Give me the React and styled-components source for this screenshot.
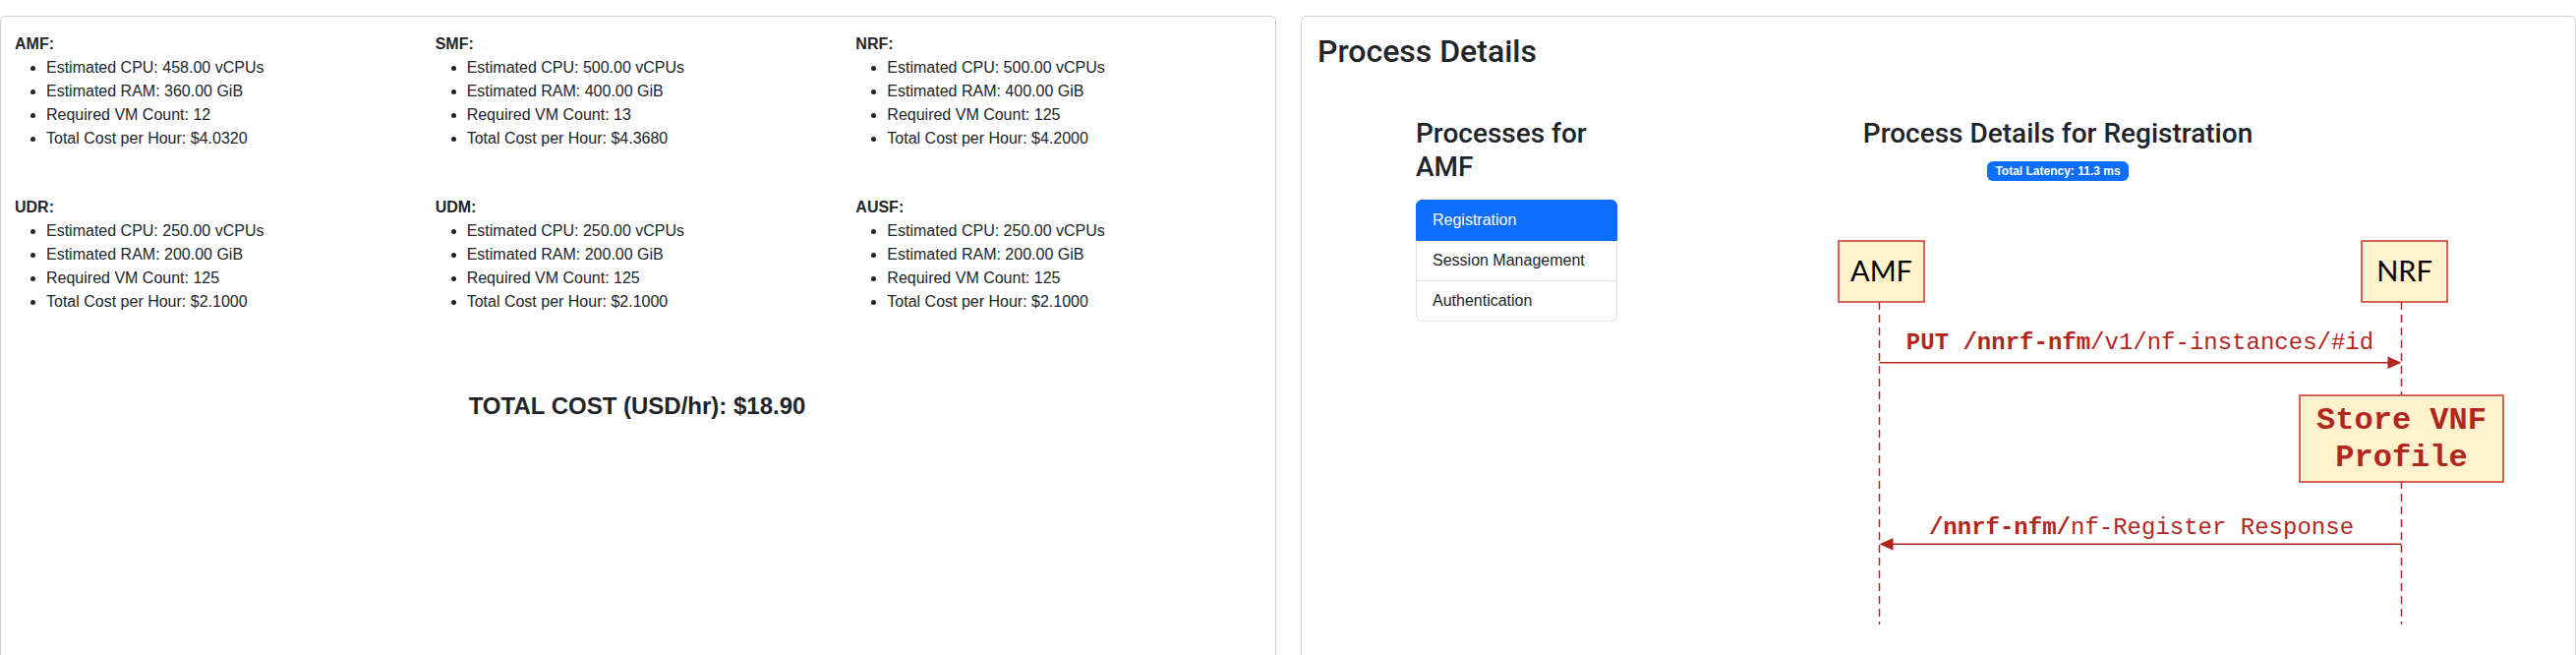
import React from "react";
import styled, { createGlobalStyle } from "styled-components";

const GlobalStyle = createGlobalStyle`
  html, body { margin: 0; padding: 0; background: #fff; }
  body {
    font-family: "Liberation Sans", Arial, sans-serif;
    font-size: 16px;
    line-height: 24px;
    color: #212529;
    overflow: hidden;
  }
  * { box-sizing: border-box; }
`;

const HEADING_FONT = 'Roboto, "Liberation Sans", Arial, sans-serif';

const Page = styled.div`
  display: grid;
  grid-template-columns: 1298px 1297px;
  column-gap: 25px;
  padding-top: 16px;
`;

const Card = styled.section`
  border: 1px solid rgba(0, 0, 0, 0.175);
  border-radius: 6px;
  background: #fff;
  min-height: 700px;
  padding: ${(p) => (p.$tight ? "16px 16px 16px 14px" : "16px")};
`;

const CostGrid = styled.div`
  display: grid;
  grid-template-columns: repeat(3, 1fr);
  column-gap: 17px;
  row-gap: 46px;
`;

const NfBlock = styled.div`
  display: flex;
  flex-direction: column;
`;

const NfName = styled.strong`
  display: block;
  font-weight: 700;
  line-height: 24px;
`;

const SpecList = styled.ul`
  margin: 0;
  padding-left: 32px;
  list-style: disc;
`;

const SpecItem = styled.li`
  line-height: 24px;
`;

const TotalCost = styled.h4`
  margin: 80px 0 0;
  font-size: 24px;
  font-weight: 700;
  line-height: 1.2;
  text-align: center;
`;

const CardTitle = styled.h2`
  margin: 0;
  font-family: ${HEADING_FONT};
  font-size: 32px;
  font-weight: 500;
  line-height: 1.2;
`;

const ProcessRow = styled.div`
  display: grid;
  grid-template-columns: 205px 848px;
  column-gap: 24px;
  padding-left: 100px;
  margin-top: 48px;
  align-items: start;
`;

const SubTitle = styled.h3`
  margin: 0 0 ${(p) => (p.$gap ? p.$gap : "0")};
  font-family: ${HEADING_FONT};
  font-size: 28px;
  font-weight: 500;
  line-height: 1.2;
  text-align: ${(p) => (p.$center ? "center" : "left")};
`;

const ListGroup = styled.div`
  display: flex;
  flex-direction: column;
`;

const ListItem = styled.div`
  padding: 8px 16px;
  line-height: 24px;
  border: 1px solid ${(p) => (p.$active ? "#0d6efd" : "#dee2e6")};
  background: ${(p) => (p.$active ? "#0d6efd" : "#fff")};
  color: ${(p) => (p.$active ? "#fff" : "#212529")};
  & + & {
    border-top-width: 0;
  }
  &:first-child {
    border-radius: 6px 6px 0 0;
  }
  &:last-child {
    border-radius: 0 0 6px 6px;
  }
`;

const DiagramCol = styled.div`
  display: flex;
  flex-direction: column;
`;

const BadgeRow = styled.div`
  display: flex;
  justify-content: center;
  margin-top: 11px;
`;

const Badge = styled.span`
  display: inline-block;
  padding: 4px 8px;
  font-size: 12px;
  font-weight: 700;
  line-height: 12px;
  color: #fff;
  background: #0d6efd;
  border-radius: 6px;
`;

const Diagram = styled.svg`
  display: block;
  margin-top: 45px;
  overflow: visible;
`;

const nfs = [
  { name: "AMF", cpu: "458.00", ram: "360.00", vms: "12", cost: "$4.0320" },
  { name: "SMF", cpu: "500.00", ram: "400.00", vms: "13", cost: "$4.3680" },
  { name: "NRF", cpu: "500.00", ram: "400.00", vms: "125", cost: "$4.2000" },
  { name: "UDR", cpu: "250.00", ram: "200.00", vms: "125", cost: "$2.1000" },
  { name: "UDM", cpu: "250.00", ram: "200.00", vms: "125", cost: "$2.1000" },
  { name: "AUSF", cpu: "250.00", ram: "200.00", vms: "125", cost: "$2.1000" },
];

const RED = "#b3261e";
const BOX_STROKE = "#c5362c";
const BOX_FILL = "#fff2cc";

function SequenceDiagram() {
  const amfX = 242.5;
  const nrfX = 773.5;
  const mono = '"Liberation Mono", "Courier New", monospace';
  return (
    <Diagram width="900" height="420" viewBox="0 0 900 420">
      <line x1={amfX} y1="78" x2={amfX} y2="406" stroke={RED} strokeWidth="1.5" strokeDasharray="8 5" />
      <line x1={nrfX} y1="78" x2={nrfX} y2="406" stroke={RED} strokeWidth="1.5" strokeDasharray="8 5" />

      <rect x="201" y="16" width="87" height="62" fill={BOX_FILL} stroke={BOX_STROKE} strokeWidth="1.5" />
      <text x="244.5" y="57" textAnchor="middle" fontFamily='Lato, "Open Sans", sans-serif' fontSize="29" fill="#000">AMF</text>
      <rect x="733" y="16" width="87" height="62" fill={BOX_FILL} stroke={BOX_STROKE} strokeWidth="1.5" />
      <text x="776.5" y="57" textAnchor="middle" fontFamily='Lato, "Open Sans", sans-serif' fontSize="29" fill="#000">NRF</text>

      <text x="507.5" y="126" textAnchor="middle" fontFamily={mono} fontSize="24" fill={RED}>
        <tspan fontWeight="700">PUT /nnrf-nfm</tspan>/v1/nf-instances/#id
      </text>
      <line x1={amfX} y1="139.7" x2={nrfX - 12} y2="139.7" stroke={RED} strokeWidth="1.5" />
      <polygon points={`${nrfX},139.7 ${nrfX - 14},133.5 ${nrfX - 14},146`} fill={RED} />

      <rect x="670" y="173" width="207" height="88" fill={BOX_FILL} stroke={BOX_STROKE} strokeWidth="1.5" />
      <text x="773.5" y="207" textAnchor="middle" fontFamily={mono} fontSize="32" fontWeight="700" fill={RED}>Store VNF</text>
      <text x="773.5" y="245" textAnchor="middle" fontFamily={mono} fontSize="32" fontWeight="700" fill={RED}>Profile</text>

      <text x="509" y="314" textAnchor="middle" fontFamily={mono} fontSize="24" fill={RED}>
        <tspan fontWeight="700">/nnrf-nfm/</tspan>nf-Register Response
      </text>
      <line x1={amfX + 12} y1="324.3" x2={nrfX} y2="324.3" stroke={RED} strokeWidth="1.5" />
      <polygon points={`${amfX},324.3 ${amfX + 14},318 ${amfX + 14},330.5`} fill={RED} />
    </Diagram>
  );
}

export default function App() {
  return (
    <>
      <GlobalStyle />
      <Page>
        <Card $tight>
          <CostGrid>
            {nfs.map((nf) => (
              <NfBlock key={nf.name}>
                <NfName>{nf.name}:</NfName>
                <SpecList>
                  <SpecItem>Estimated CPU: {nf.cpu} vCPUs</SpecItem>
                  <SpecItem>Estimated RAM: {nf.ram} GiB</SpecItem>
                  <SpecItem>Required VM Count: {nf.vms}</SpecItem>
                  <SpecItem>Total Cost per Hour: {nf.cost}</SpecItem>
                </SpecList>
              </NfBlock>
            ))}
          </CostGrid>
          <TotalCost>TOTAL COST (USD/hr): $18.90</TotalCost>
        </Card>
        <Card>
          <CardTitle>Process Details</CardTitle>
          <ProcessRow>
            <div>
              <SubTitle $gap="16px">Processes for AMF</SubTitle>
              <ListGroup>
                <ListItem $active>Registration</ListItem>
                <ListItem>Session Management</ListItem>
                <ListItem>Authentication</ListItem>
              </ListGroup>
            </div>
            <DiagramCol>
              <SubTitle $center>Process Details for Registration</SubTitle>
              <BadgeRow>
                <Badge>Total Latency: 11.3 ms</Badge>
              </BadgeRow>
              <SequenceDiagram />
            </DiagramCol>
          </ProcessRow>
        </Card>
      </Page>
    </>
  );
}
